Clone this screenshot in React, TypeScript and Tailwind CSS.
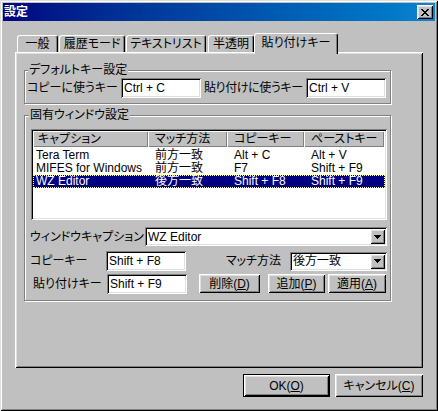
const raised = "shadow-[inset_1px_1px_0_#fff,inset_-1px_-1px_0_#000,inset_2px_2px_0_#dfdfdf,inset_-2px_-2px_0_#808080]";
const sunken = "shadow-[inset_1px_1px_0_#808080,inset_-1px_-1px_0_#fff,inset_2px_2px_0_#000,inset_-2px_-2px_0_#dfdfdf]";
const etched = "border border-[#808080] shadow-[inset_1px_1px_0_#fff,1px_1px_0_#fff]";

const rows = [
  ["Tera Term", "前方一致", "Alt + C", "Alt + V"],
  ["MIFES for Windows", "前方一致", "F7", "Shift + F9"],
  ["WZ Editor", "後方一致", "Shift + F8", "Shift + F9"],
];
const cols = ["キャプション", "マッチ方法", "コピーキー", "ペーストキー"];
const widths = ["w-[115px]", "w-[79px]", "w-[77px]", "w-[80px]"];

function Edit({ value, className = "" }: { value: string; className?: string }) {
  return (
    <div className={`h-[20px] bg-white flex items-center pl-[3px] ${sunken} ${className}`}>
      {value}
    </div>
  );
}

function Arrow() {
  return (
    <svg width="7" height="4" viewBox="0 0 7 4" shapeRendering="crispEdges">
      <path d="M0 0h7v1H0zM1 1h5v1H1zM2 2h3v1H2zM3 3h1v1H3z" fill="#000" />
    </svg>
  );
}

function Combo({ value, className = "" }: { value: string; className?: string }) {
  return (
    <div className={`h-[19px] bg-white flex items-stretch p-[2px] ${sunken} ${className}`}>
      <div className="flex-1 flex items-center pl-[1px]">{value}</div>
      <div className={`w-[15px] bg-[#c0c0c0] flex items-center justify-center ${raised}`}>
        <Arrow />
      </div>
    </div>
  );
}

function Btn({ children, className = "" }: { children: React.ReactNode; className?: string }) {
  return (
    <div className={`h-[19px] bg-[#c0c0c0] flex items-center justify-center ${raised} ${className}`}>
      {children}
    </div>
  );
}

function Tab({ label, className = "", active = false }: { label: string; className?: string; active?: boolean }) {
  return (
    <div
      className={`bg-[#c0c0c0] flex justify-center rounded-t-[3px] border-t border-l border-white border-r border-r-black shadow-[inset_-1px_0_0_#808080] ${
        active ? "h-[21px] relative z-10 -mb-[2px] pt-[2px] items-start" : "h-[17px] items-center"
      } ${className}`}
    >
      {label}
    </div>
  );
}

export default function App() {
  return (
    <div className="w-[438px] h-[411px] bg-[#c0c0c0] p-[3px] text-[12px] leading-[14px] text-black whitespace-nowrap [font-family:'Liberation_Sans','Noto_Sans_CJK_JP',sans-serif] [font-feature-settings:'palt'] shadow-[inset_1px_1px_0_#dfdfdf,inset_-1px_-1px_0_#000,inset_2px_2px_0_#fff,inset_-2px_-2px_0_#808080]">
      {/* title bar */}
      <div className="h-[18px] bg-linear-to-r from-[#000080] to-[#1084d0] flex items-center justify-between pl-[1px]">
        <span className="text-white font-bold text-[12px]">設定</span>
        <div className={`w-[16px] h-[14px] mr-[2px] bg-[#c0c0c0] flex items-center justify-center ${raised}`}>
          <svg width="8" height="7" viewBox="0 0 8 7" shapeRendering="crispEdges">
            <path
              d="M0 0h2v1H0zM6 0h2v1H6zM1 1h2v1H1zM5 1h2v1H5zM2 2h4v1H2zM3 3h2v1H3zM2 4h4v1H2zM1 5h2v1H1zM5 5h2v1H5zM0 6h2v1H0zM6 6h2v1H6z"
              fill="#000"
            />
          </svg>
        </div>
      </div>

      <div className="mx-[12px] mt-[12px]">
        {/* tabs */}
        <div className="flex items-end h-[19px]">
          <Tab label="一般" className="ml-[2px] w-[41px]" />
          <Tab label="履歴モード" className="ml-[1px] w-[66px]" />
          <Tab label="テキストリスト" className="ml-[1px] w-[80px]" />
          <Tab label="半透明" className="ml-[2px] w-[46px]" />
          <Tab label="貼り付けキー" className="w-[84px]" active />
        </div>

        {/* panel */}
        <div className={`h-[316px] pt-[18px] pl-[9px] ${raised}`}>
          <div className={`relative w-[367px] h-[34px] pt-[7px] pl-[2px] flex items-start ${etched}`}>
            <span className="absolute -top-[8px] left-[3px] px-[1px] bg-[#c0c0c0]">デフォルトキー設定</span>
            <span className="w-[94px] h-[20px] flex items-center">コピーに使うキー</span>
            <Edit value="Ctrl + C" className="w-[80px]" />
            <span className="ml-[3px] w-[102px] h-[20px] flex items-center tracking-[-0.4px]">貼り付けに使うキー</span>
            <Edit value="Ctrl + V" className="w-[80px]" />
          </div>

          <div className={`relative mt-[11px] w-[367px] h-[186px] pt-[13px] pl-[6px] pr-[3px] ${etched}`}>
            <span className="absolute -top-[8px] left-[4px] px-[1px] bg-[#c0c0c0]">固有ウィンドウ設定</span>

            {/* list */}
            <div className={`h-[91px] bg-white p-[2px] ${sunken}`}>
              <div className="flex h-[16px] bg-[#c0c0c0]">
                {cols.map((c, i) => (
                  <div
                    key={c}
                    className={`${widths[i]} flex items-center ${i === 0 ? "pl-[5px]" : "pl-[7px]"} shadow-[inset_1px_1px_0_#fff,inset_-1px_-1px_0_#808080]`}
                  >
                    {c}
                  </div>
                ))}
                <div className="flex-1 shadow-[inset_1px_1px_0_#fff,inset_-1px_-1px_0_#808080]" />
              </div>
              <div className="mt-[2px]">
                {rows.map((r, ri) => (
                  <div
                    key={ri}
                    className={`flex h-[13px] leading-[13px] ${
                      ri === 2 ? "bg-[#000080] text-white outline-dotted outline-1 outline-[#ffff80] -outline-offset-1" : ""
                    }`}
                  >
                    {r.map((cell, ci) => (
                      <div key={ci} className={`${widths[ci]} ${ci === 0 ? "pl-[3px]" : "pl-[7px]"}`}>
                        {cell}
                      </div>
                    ))}
                  </div>
                ))}
              </div>
            </div>

            <div className="flex items-center mt-[7px]">
              <span className="w-[115px] -ml-[1px]">ウィンドウキャプション</span>
              <Combo value="WZ Editor" className="flex-1" />
            </div>

            <div className="flex items-center mt-[5px]">
              <span className="w-[76px] -ml-[1px]">コピーキー</span>
              <Edit value="Shift + F8" className="w-[80px]" />
              <span className="ml-auto mr-[9px]">マッチ方法</span>
              <Combo value="後方一致" className="w-[97px]" />
            </div>

            <div className="flex items-start mt-[3px]">
              <span className="w-[76px] pl-[2px] h-[20px] flex items-center">貼り付けキー</span>
              <Edit value="Shift + F9" className="w-[80px]" />
              <Btn className="ml-[12px] w-[61px]">
                削除(<span className="underline">D</span>)
              </Btn>
              <Btn className="ml-[8px] w-[57px]">
                追加(<span className="underline">P</span>)
              </Btn>
              <Btn className="ml-[3px] w-[58px]">
                適用(<span className="underline">A</span>)
              </Btn>
            </div>
          </div>
        </div>
      </div>

      {/* dialog buttons */}
      <div className="flex justify-end gap-[5px] mr-[12px] mt-[6px]">
        <div className="w-[87px] h-[23px] border border-black">
          <div className={`w-full h-full bg-[#c0c0c0] flex items-center justify-center ${raised}`}>
            OK(<span className="underline">O</span>)
          </div>
        </div>
        <div className={`w-[88px] h-[23px] bg-[#c0c0c0] flex items-center justify-center ${raised}`}>
          キャンセル(<span className="underline">C</span>)
        </div>
      </div>
    </div>
  );
}
